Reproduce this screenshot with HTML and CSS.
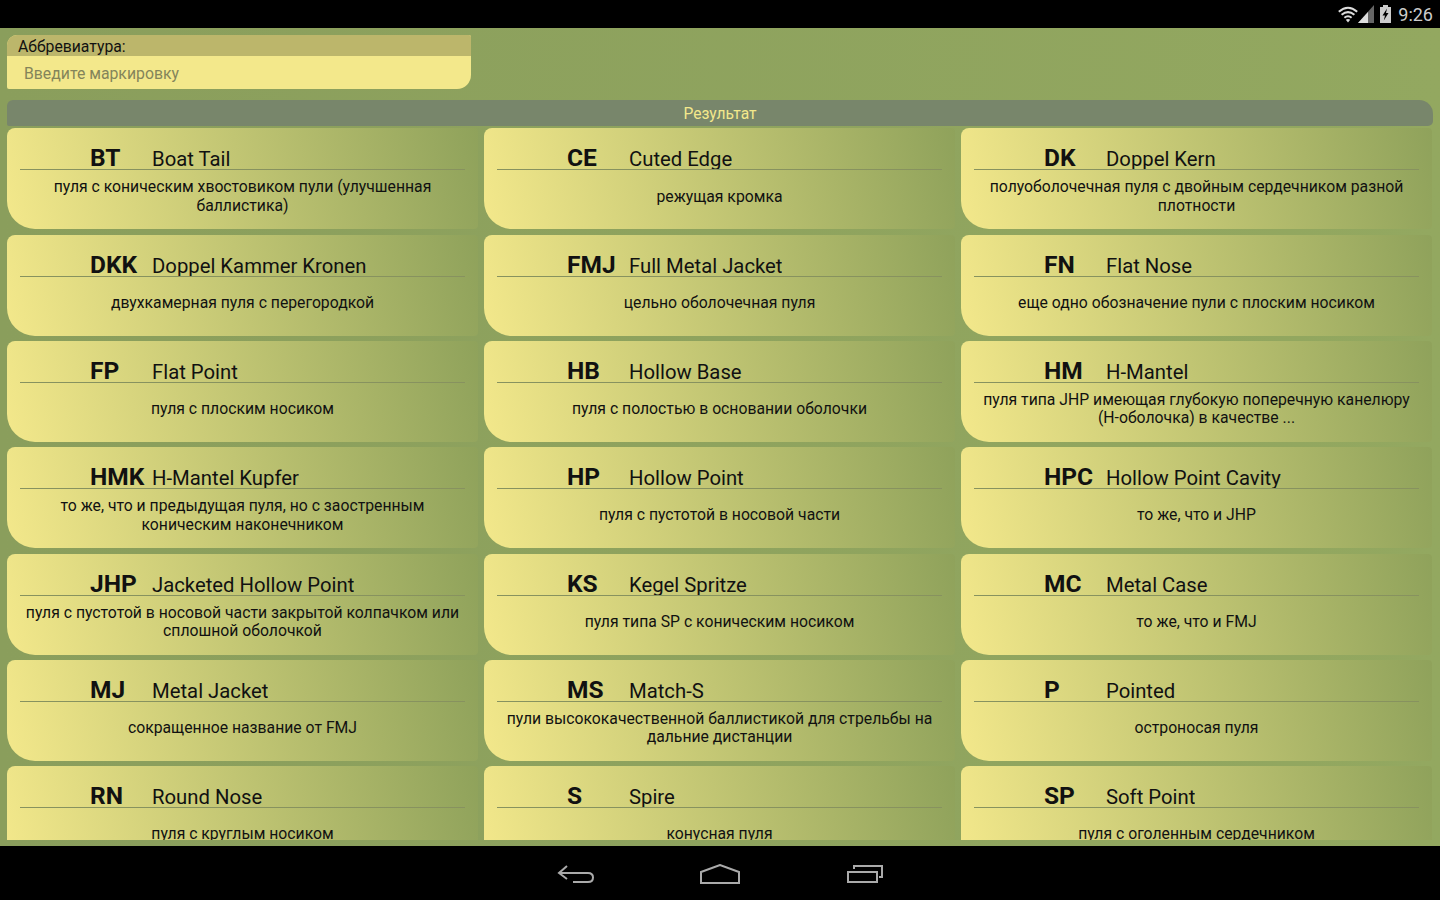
FILE: index.html
```html
<!DOCTYPE html>
<html lang="ru">
<head>
    <meta charset="UTF-8">
    <title>Аббревиатура</title>
    <link rel="stylesheet" href="styles.css">
</head>
<body>
    <div class="statusbar">
        <svg class="icon-wifi" width="20" height="17" viewBox="0 0 20 17" fill="none" stroke="#ddd" stroke-width="2">
            <path d="M0.800 5.800Q10 -2.200 19.200 5.800"/>
            <path d="M3.600 8.800Q10 3.400 16.400 8.800"/>
            <path d="M6.400 11.700Q10 8.800 13.600 11.700"/>
            <path d="M7.800 13.800Q10 12.400 12.200 13.800L10 16.500Z" fill="#ddd" stroke="none"/>
        </svg>
        <svg class="icon-signal" width="16" height="18" viewBox="0 0 16 18">
            <path d="M16 0V18H0Z" fill="#666"/>
            <path d="M10 7V18H0Z" fill="#ddd"/>
        </svg>
        <svg class="icon-battery" width="11" height="18" viewBox="0 0 11 18">
            <path d="M3 0h5v2h3v16H0V2h3z" fill="#ccc"/>
            <path d="M7 3.500L2.500 10.500H5L3.800 15.500L8.500 8H6Z" fill="#000"/>
        </svg>
        <span class="clock">9:26</span>
    </div>
    <div class="main">
        <div class="search">
            <div class="search-label">Аббревиатура:</div>
            <div class="search-input">Введите маркировку</div>
        </div>
        <div class="result-bar">Результат</div>
        <div class="list">
            <div class="card">
                <div class="card-head"><b>BT</b><span>Boat Tail</span></div>
                <div class="card-text">пуля с коническим хвостовиком пули (улучшенная баллистика)</div>
            </div>
            <div class="card">
                <div class="card-head"><b>CE</b><span>Cuted Edge</span></div>
                <div class="card-text">режущая кромка</div>
            </div>
            <div class="card">
                <div class="card-head"><b>DK</b><span>Doppel Kern</span></div>
                <div class="card-text">полуоболочечная пуля с двойным сердечником разной плотности</div>
            </div>
            <div class="card">
                <div class="card-head"><b>DKK</b><span>Doppel Kammer Kronen</span></div>
                <div class="card-text">двухкамерная пуля с перегородкой</div>
            </div>
            <div class="card">
                <div class="card-head"><b>FMJ</b><span>Full Metal Jacket</span></div>
                <div class="card-text">цельно оболочечная пуля</div>
            </div>
            <div class="card">
                <div class="card-head"><b>FN</b><span>Flat Nose</span></div>
                <div class="card-text">еще одно обозначение пули с плоским носиком</div>
            </div>
            <div class="card">
                <div class="card-head"><b>FP</b><span>Flat Point</span></div>
                <div class="card-text">пуля с плоским носиком</div>
            </div>
            <div class="card">
                <div class="card-head"><b>HB</b><span>Hollow Base</span></div>
                <div class="card-text">пуля с полостью в основании оболочки</div>
            </div>
            <div class="card">
                <div class="card-head"><b>HM</b><span>H-Mantel</span></div>
                <div class="card-text">пуля типа JHP имеющая глубокую поперечную канелюру (Н-оболочка) в качестве ...</div>
            </div>
            <div class="card">
                <div class="card-head"><b>HMK</b><span>H-Mantel Kupfer</span></div>
                <div class="card-text">то же, что и предыдущая пуля, но с заостренным коническим наконечником</div>
            </div>
            <div class="card">
                <div class="card-head"><b>HP</b><span>Hollow Point</span></div>
                <div class="card-text">пуля с пустотой в носовой части</div>
            </div>
            <div class="card">
                <div class="card-head"><b>HPC</b><span>Hollow Point Cavity</span></div>
                <div class="card-text">то же, что и JHP</div>
            </div>
            <div class="card">
                <div class="card-head"><b>JHP</b><span>Jacketed Hollow Point</span></div>
                <div class="card-text">пуля с пустотой в носовой части закрытой колпачком или сплошной оболочкой</div>
            </div>
            <div class="card">
                <div class="card-head"><b>KS</b><span>Kegel Spritze</span></div>
                <div class="card-text">пуля типа SP с коническим носиком</div>
            </div>
            <div class="card">
                <div class="card-head"><b>MC</b><span>Metal Case</span></div>
                <div class="card-text">то же, что и FMJ</div>
            </div>
            <div class="card">
                <div class="card-head"><b>MJ</b><span>Metal Jacket</span></div>
                <div class="card-text">сокращенное название от FMJ</div>
            </div>
            <div class="card">
                <div class="card-head"><b>MS</b><span>Match-S</span></div>
                <div class="card-text">пули высококачественной баллистикой для стрельбы на дальние дистанции</div>
            </div>
            <div class="card">
                <div class="card-head"><b>P</b><span>Pointed</span></div>
                <div class="card-text">остроносая пуля</div>
            </div>
            <div class="card">
                <div class="card-head"><b>RN</b><span>Round Nose</span></div>
                <div class="card-text">пуля с круглым носиком</div>
            </div>
            <div class="card">
                <div class="card-head"><b>S</b><span>Spire</span></div>
                <div class="card-text">конусная пуля</div>
            </div>
            <div class="card">
                <div class="card-head"><b>SP</b><span>Soft Point</span></div>
                <div class="card-text">пуля с оголенным сердечником</div>
            </div>
        </div>
    </div>
    <div class="navbar">
        <svg width="38" height="20" viewBox="0 0 38 20" fill="none" stroke="#aaa" stroke-width="2">
            <path d="M10 2L2 9L10 15M2 9H31Q36 9 36 13.500Q36 18 31 18H16"/>
        </svg>
        <svg width="40" height="20" viewBox="0 0 40 20" fill="none" stroke="#aaa" stroke-width="2">
            <path d="M1 8L20 1L39 8V19H1Z"/>
        </svg>
        <svg width="38" height="20" viewBox="0 0 38 20" fill="none" stroke="#aaa" stroke-width="2">
            <path d="M3 8H32V18H3ZM9 5V2H37V13H34"/>
        </svg>
    </div>
</body>
</html>
```

FILE: styles.css
```css
* {
    box-sizing: border-box;
}
html, body {
    height: 100%;
}
body {
    margin: 0;
    width: 1440px;
    height: 900px;
    overflow: hidden;
    display: flex;
    flex-direction: column;
    background: #000;
    font-family: Roboto, "Noto Sans", sans-serif;
    color: #111;
}
.statusbar {
    height: 28px;
    flex: none;
    display: flex;
    align-items: center;
    justify-content: flex-end;
    padding-right: 7px;
    background: #000;
}
.icon-battery {
    margin-left: 6px;
}
.clock {
    color: #ccc;
    font-size: 18px;
    margin-left: 7px;
}
.main {
    height: 818px;
    flex: none;
    padding: 7px 7px 6px;
    background: linear-gradient(90deg, #8a9e5c, #93a860);
    display: flex;
    flex-direction: column;
}
.search {
    width: 464px;
    height: 54px;
    flex: none;
    border-radius: 10px 2px 14px 2px;
    overflow: hidden;
    background: #f3e88b;
}
.search-label {
    height: 21px;
    padding: 3px 11px 0;
    font-size: 15.750px;
    line-height: 18px;
    background: #bcb66b;
}
.search-input {
    padding: 8px 17px 0;
    font-size: 15.800px;
    line-height: 20px;
    color: #84845a;
}
.result-bar {
    height: 26px;
    margin-top: 11px;
    flex: none;
    border-radius: 6px 14px 5px 2px;
    background: #78866b;
    color: #f3e88b;
    font-size: 15.600px;
    line-height: 29px;
    text-align: center;
}
.list {
    flex: 1;
    min-height: 0;
    margin-top: 2.300px;
    overflow: hidden;
    display: grid;
    grid-template-columns: repeat(3, 471px);
    grid-auto-rows: 101px;
    column-gap: 6px;
    row-gap: 5.330px;
}
.card {
    padding: 0 13px;
    border-radius: 8px 4px 4px 28px;
    background: linear-gradient(78deg, #f3e88b 0%, #8fa25b 100%);
}
.card-head {
    height: 42px;
    display: flex;
    align-items: flex-end;
    padding-left: 70px;
    border-bottom: 1px solid #87925f;
}
.card-head b {
    width: 62px;
    font-size: 24.500px;
    line-height: 22px;
    font-weight: 700;
}
.card-head span {
    font-size: 20.300px;
    line-height: 20px;
    height: 20px;
    overflow: hidden;
}
.card-text {
    height: 53px;
    display: flex;
    align-items: center;
    justify-content: center;
    text-align: center;
    font-size: 15.750px;
    line-height: 18.600px;
}
.navbar {
    flex: 1;
    display: flex;
    align-items: center;
    justify-content: center;
    gap: 105px;
    padding-top: 2px;
    background: #000;
}
```
